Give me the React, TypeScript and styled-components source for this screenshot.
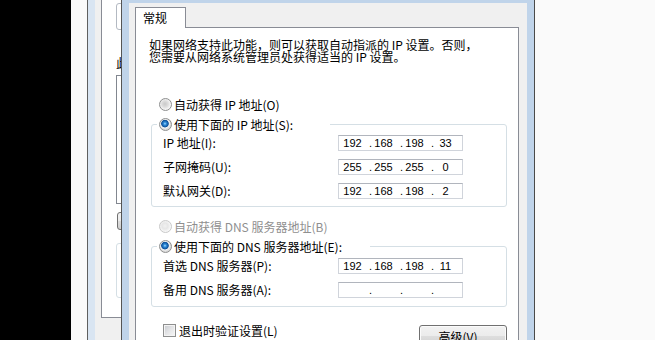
import { Fragment } from "react";
import styled, { createGlobalStyle } from "styled-components";

// ---------- Global ----------

const GlobalStyle = createGlobalStyle`
  html, body {
    margin: 0;
    padding: 0;
    background: #fafafa;
  }
  body {
    font-family: "Noto Sans CJK SC", "Noto Sans", sans-serif;
    font-size: 12px;
    color: #000;
  }
`;

// ---------- Screen ----------

const Screen = styled.div`
  display: flex;
  width: 655px;
  height: 340px;
  overflow: hidden;
  background: #fafafa;
`;

const Blackout = styled.div`
  width: 71px;
  flex-shrink: 0;
  background: #000;
`;

const Desktop = styled.div<{ $width?: number }>`
  flex: ${(p) => (p.$width ? `0 0 ${p.$width}px` : "1")};
  background: #fafafa;
`;

// ---------- Back window (Local Area Connection) ----------

const BackWindow = styled.div`
  display: flex;
  width: 34px;
  flex-shrink: 0;
  box-sizing: border-box;
  overflow: hidden;
  border-left: 1px solid #5f5f5f;
  padding-left: 7px;
  background: #d9e5f2;
`;

const BackClient = styled.div`
  flex: 1;
  display: flex;
  background: #f0f0f0;
  padding-left: 6px;
`;

const BackPanel = styled.div`
  flex-shrink: 0;
  width: 380px;
  height: 318px;
  box-sizing: border-box;
  display: flex;
  flex-direction: column;
  align-items: flex-start;
  background: #fff;
  border-left: 1px solid #898c95;
  border-bottom: 1px solid #898c95;
  padding: 3px 0 0 14px;
`;

const AdapterBox = styled.div`
  width: 340px;
  height: 27px;
  box-sizing: border-box;
  border: 1px solid #b3b9c2;
  border-radius: 3px;
`;

const BackLabel = styled.div`
  margin-top: 27px;
  line-height: 12px;
  white-space: nowrap;
`;

const ListBox = styled.div`
  margin-top: 6px;
  width: 340px;
  height: 129px;
  box-sizing: border-box;
  border: 1px solid #828790;
`;

const SmallButton = styled.div`
  margin: 8px 0 0 1px;
  width: 80px;
  height: 18px;
  box-sizing: border-box;
  border: 1px solid #707070;
  border-radius: 3px;
  background: linear-gradient(#f2f2f2 0%, #ebebeb 50%, #dddddd 50%, #cfcfcf 100%);
`;

const DescBox = styled.div`
  margin-top: 13px;
  width: 340px;
  height: 55px;
  box-sizing: border-box;
  border: 1px solid #d5dfe5;
  border-radius: 3px;
`;

// ---------- Front window (IPv4 properties) ----------

const FrontWindow = styled.div`
  flex-shrink: 0;
  width: 414px;
  box-sizing: border-box;
  display: flex;
  flex-direction: column;
  border-left: 1px solid #555;
  border-right: 1px solid #4a4a4a;
  padding: 3px 7px 0;
  background: #c0d4ea;
`;

const Client = styled.div`
  flex: 1;
  display: flex;
  flex-direction: column;
  background: #f0f0f0;
  padding: 4px 8px 0 6px;
`;

const TabStrip = styled.div`
  display: flex;
`;

const Tab = styled.div`
  position: relative;
  z-index: 1;
  width: 51px;
  height: 21px;
  box-sizing: border-box;
  display: flex;
  align-items: center;
  padding-left: 7px;
  margin-bottom: -1px;
  background: #fff;
  border: 1px solid #898c95;
  border-bottom: none;
  line-height: 12px;
`;

const TabPanel = styled.div`
  flex: 1;
  background: #fff;
  border: 1px solid #898c95;
  padding: 11px 0 0 13px;
`;

const Intro = styled.div`
  line-height: 12px;
  white-space: nowrap;
`;

const Settings = styled.div`
  margin: 33px 0 0 2px;
  width: 356px;
  display: flex;
  flex-direction: column;
`;

const RadioRow = styled.div<{ $disabled?: boolean; $top?: number }>`
  display: flex;
  align-items: center;
  gap: 2px;
  height: 16px;
  padding-left: 8px;
  margin-top: ${(p) => p.$top ?? 0}px;
  white-space: nowrap;
  color: ${(p) => (p.$disabled ? "#8f8f8f" : "#000")};
`;

const Radio = styled.span<{ $checked?: boolean; $disabled?: boolean }>`
  width: 13px;
  height: 13px;
  flex-shrink: 0;
  box-sizing: border-box;
  border-radius: 50%;
  border: 1px solid ${(p) => (p.$disabled ? "#c9c9c9" : "#8e8f8f")};
  background: ${(p) =>
    p.$checked
      ? "radial-gradient(circle at 45% 42%, #a8dcff 0, #2f8ddb 1.4px, #0c4f98 3.4px, #f4f4f4 4.2px, #dcdcdc 5.6px)"
      : p.$disabled
      ? "radial-gradient(circle at 45% 45%, #f1f1f1 0, #e6e6e6 3px, #f7f7f7 5.6px)"
      : "radial-gradient(circle at 45% 45%, #c9c9c9 0, #dcdcdc 3px, #f6f6f6 5.6px)"};
`;

const Group = styled.fieldset<{ $top: number; $bottom: number }>`
  margin: 4px 0 0;
  padding: ${(p) => p.$top}px 0 ${(p) => p.$bottom}px 11px;
  min-width: 0;
  border: 1px solid #d5dfe5;
  border-radius: 3px;
`;

const Legend = styled.legend<{ $width: number }>`
  width: ${(p) => p.$width}px;
  box-sizing: border-box;
  margin-left: -6px;
  padding: 0 0 0 2px;
  & > ${RadioRow} {
    padding-left: 0;
  }
`;

const Rows = styled.div`
  display: flex;
  flex-direction: column;
  gap: 8px;
`;

const FieldRow = styled.div`
  display: flex;
  align-items: center;
  height: 16px;
`;

const FieldLabel = styled.span`
  width: 175px;
  flex-shrink: 0;
  white-space: nowrap;
  line-height: 12px;
`;

const IpBox = styled.div`
  display: flex;
  align-items: center;
  width: 125px;
  height: 16px;
  box-sizing: border-box;
  padding-left: 3px;
  background: #fff;
  border: 1px solid #d0d4db;
  border-top-color: #b1b5bd;
  font-family: "Liberation Sans", Arial, sans-serif;
  font-size: 11px;
  line-height: 14px;
`;

const Octet = styled.span`
  width: 21px;
  text-align: center;
`;

const Dot = styled.span`
  width: 10px;
  box-sizing: border-box;
  padding-right: 1px;
  text-align: right;
`;

const BottomRow = styled.div`
  display: flex;
  justify-content: space-between;
  align-items: flex-start;
  margin-top: 18px;
`;

const CheckRow = styled.label`
  display: flex;
  align-items: center;
  gap: 3px;
  height: 13px;
  margin-top: -1px;
  padding-left: 12px;
  white-space: nowrap;
  line-height: 12px;
`;

const CheckBox = styled.span`
  width: 13px;
  height: 13px;
  flex-shrink: 0;
  box-sizing: border-box;
  border: 1px solid #8e8f8f;
  box-shadow: inset 0 0 0 1px #f4f4f4;
  background: linear-gradient(135deg, #c6c9ce 0%, #e4e5e7 50%, #f7f7f7 100%);
`;

const PushButton = styled.button`
  width: 88px;
  height: 23px;
  box-sizing: border-box;
  padding: 0;
  font: inherit;
  font-size: 12px;
  line-height: 12px;
  color: #000;
  border: 1px solid #707070;
  border-radius: 3px;
  box-shadow: inset 0 0 0 1px #fbfbfb;
  background: linear-gradient(#f2f2f2 0%, #ebebeb 50%, #dddddd 50%, #cfcfcf 100%);
`;

// ---------- Data ----------

type IpRow = { label: string; value: string[] };

const ipRows: IpRow[] = [
  { label: "IP 地址(I):", value: ["192", "168", "198", "33"] },
  { label: "子网掩码(U):", value: ["255", "255", "255", "0"] },
  { label: "默认网关(D):", value: ["192", "168", "198", "2"] },
];

const dnsRows: IpRow[] = [
  { label: "首选 DNS 服务器(P):", value: ["192", "168", "198", "11"] },
  { label: "备用 DNS 服务器(A):", value: ["", "", "", ""] },
];

const IpField = ({ value }: { value: string[] }) => (
  <IpBox>
    {value.map((part, i) => (
      <Fragment key={i}>
        {i > 0 && <Dot>.</Dot>}
        <Octet>{part}</Octet>
      </Fragment>
    ))}
  </IpBox>
);

const Fields = ({ rows }: { rows: IpRow[] }) => (
  <Rows>
    {rows.map((row) => (
      <FieldRow key={row.label}>
        <FieldLabel>{row.label}</FieldLabel>
        <IpField value={row.value} />
      </FieldRow>
    ))}
  </Rows>
);

// ---------- App ----------

const App = () => (
  <>
    <GlobalStyle />
    <Screen>
      <Blackout />
      <Desktop $width={16} />

      <BackWindow>
        <BackClient>
          <BackPanel>
            <AdapterBox />
            <BackLabel>此连接使用下列项目(O):</BackLabel>
            <ListBox />
            <SmallButton />
            <DescBox />
          </BackPanel>
        </BackClient>
      </BackWindow>

      <FrontWindow>
        <Client>
          <TabStrip>
            <Tab>常规</Tab>
          </TabStrip>
          <TabPanel>
            <Intro>
              如果网络支持此功能，则可以获取自动指派的 IP 设置。否则，
              <br />
              您需要从网络系统管理员处获得适当的 IP 设置。
            </Intro>

            <Settings>
              <RadioRow>
                <Radio />
                自动获得 IP 地址(O)
              </RadioRow>
              <Group $top={3} $bottom={7}>
                <Legend $width={173}>
                  <RadioRow>
                    <Radio $checked />
                    使用下面的 IP 地址(S):
                  </RadioRow>
                </Legend>
                <Fields rows={ipRows} />
              </Group>

              <RadioRow $disabled $top={11}>
                <Radio $disabled />
                自动获得 DNS 服务器地址(B)
              </RadioRow>
              <Group $top={4} $bottom={8}>
                <Legend $width={213}>
                  <RadioRow>
                    <Radio $checked />
                    使用下面的 DNS 服务器地址(E):
                  </RadioRow>
                </Legend>
                <Fields rows={dnsRows} />
              </Group>

              <BottomRow>
                <CheckRow>
                  <CheckBox />
                  退出时验证设置(L)
                </CheckRow>
                <PushButton>高级(V)...</PushButton>
              </BottomRow>
            </Settings>
          </TabPanel>
        </Client>
      </FrontWindow>

      <Desktop />
    </Screen>
  </>
);

export default App;
